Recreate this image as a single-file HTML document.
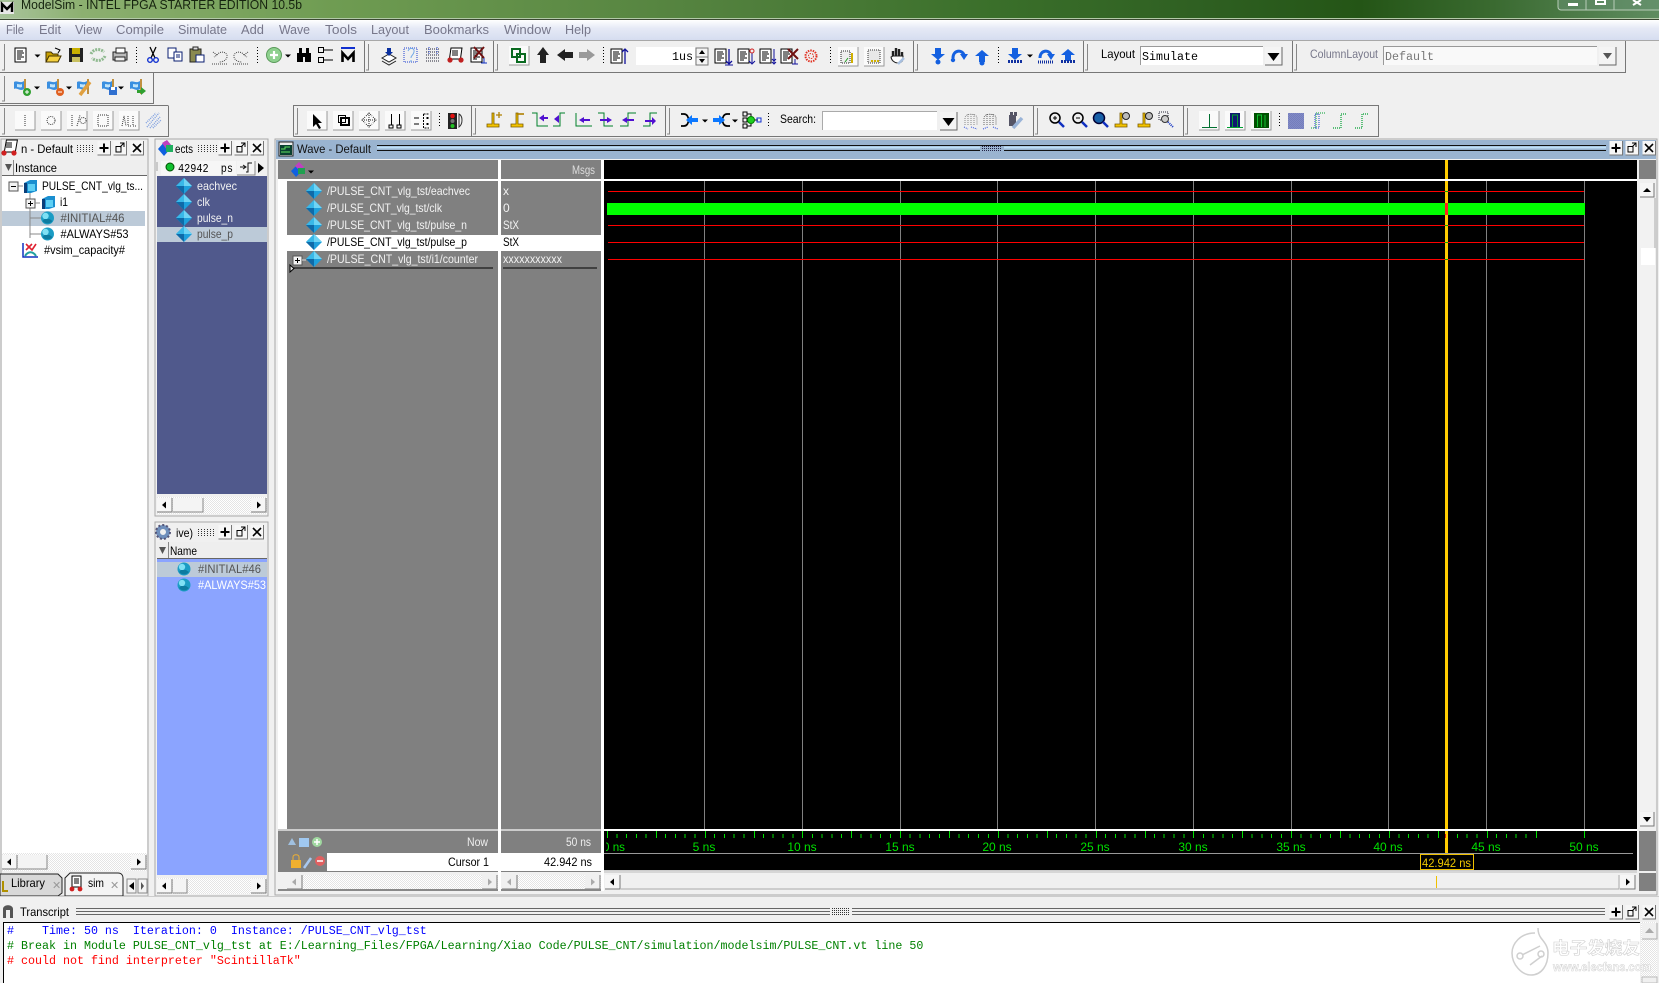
<!DOCTYPE html>
<html><head><meta charset="utf-8"><title>ModelSim</title>
<style>
html,body{margin:0;padding:0;background:#f0f0f0;overflow:hidden}
svg{display:block;position:absolute;left:0;top:0}
text{font-family:"Liberation Sans","Noto Sans CJK SC",sans-serif;font-size:12px;white-space:pre}
.m{fill:#77778a;font-size:13px}
.k{fill:#000}.w{fill:#f2f2f2}.g{fill:#5a5a5a}
.mono{font-family:"Liberation Mono",monospace;font-size:11.67px}
.r{fill:#00e000;text-anchor:middle;font-size:12px}
</style></head><body>
<svg width="1659" height="983" viewBox="0 0 1659 983" xmlns="http://www.w3.org/2000/svg">
<defs>
<linearGradient id="tb" x1="0" x2="1" y1="0" y2="0">
<stop offset="0" stop-color="#a9c49c"/><stop offset=".05" stop-color="#8cb070"/><stop offset=".2" stop-color="#6f9c52"/><stop offset=".45" stop-color="#507f3c"/><stop offset=".6" stop-color="#3a6f2a"/><stop offset=".72" stop-color="#2f6022"/><stop offset=".82" stop-color="#245516"/><stop offset=".9" stop-color="#3a6a30"/><stop offset="1" stop-color="#5f8c60"/>
</linearGradient>
<linearGradient id="mn" x1="0" x2="0" y1="0" y2="1"><stop offset="0" stop-color="#fff"/><stop offset=".4" stop-color="#e6eaf6"/><stop offset="1" stop-color="#d6ddf0"/></linearGradient>
<pattern id="ck" width="2" height="2" patternUnits="userSpaceOnUse"><rect width="2" height="2" fill="#fff"/><rect width="1" height="1" fill="#e4e4e4"/><rect x="1" y="1" width="1" height="1" fill="#e4e4e4"/></pattern>
<clipPath id="c0"><rect x="606" y="840" width="60" height="14"/></clipPath>
<g id="dia"><path d="M0-8 8 0 0 8-8 0Z" fill="#1ea0dc"/><path d="M0-8 8 0H0Z" fill="#6fd4f4"/><path d="M0-8-8 0H0Z" fill="#39b8e8"/><path d="M0 8-8 0H0Z" fill="#0f6aa8"/></g>
<g id="sph"><circle r="6.5" fill="#1b9cc4"/><circle cx="-2" cy="-2" r="3.2" fill="#7fe0f4"/><path d="M-5 3A6.5 6.5 0 0 0 5 3L2 1-3 1Z" fill="#0d7ba0"/></g>
<g id="cube"><path d="M-6-3 0-6H7V5L1 7H-6Z" fill="#1a8fd0"/><path d="M-2-2H5V5H-2Z" fill="#5fd0f4"/><path d="M-6-3V7H-3V-3Z" fill="#0b3f7a"/></g>
<g id="drop"><path d="M-3-1.5H3L0 1.5Z" fill="#000"/></g>
<g id="doc"><rect x="-6" y="-7" width="11" height="14" fill="#fff" stroke="#000"/><path d="M-4-4H2M-4-2H3M-4 0H1M-4 2H3M-4 4H0" stroke="#000" fill="none"/></g>
<g id="plus"><rect x="-6.5" y="-7" width="13" height="14" fill="#f6f6f6"/><path d="M6.5-7V7H-6.5" stroke="#777" fill="none"/><path d="M0-4.5V4.5M-4.5 0H4.5" stroke="#000" stroke-width="2"/></g>
<g id="flt"><rect x="-6.5" y="-7" width="13" height="14" fill="#f6f6f6"/><path d="M6.5-7V7H-6.5" stroke="#777" fill="none"/><path d="M-4-1.5H1V4H-4ZM0-5H4V-1" stroke="#000" fill="none"/><path d="M4-5 0-1" stroke="#000"/></g>
<g id="cls"><rect x="-6.5" y="-7" width="13" height="14" fill="#f6f6f6"/><path d="M6.5-7V7H-6.5" stroke="#777" fill="none"/><path d="M-4-4 4 4M4-4-4 4" stroke="#000" stroke-width="1.6"/></g>
<g id="sl"><rect width="15" height="14" fill="#f6f6f6"/><path d="M15 0V14H0" stroke="#777" fill="none"/><path d="M5 7 9 3.5V10.5Z" fill="#000"/></g>
<g id="sr"><rect width="15" height="14" fill="#f6f6f6"/><path d="M15 0V14H0" stroke="#777" fill="none"/><path d="M10 7 6 3.5V10.5Z" fill="#000"/></g>
<g id="sld"><rect width="15" height="14" fill="#f0f0f0"/><path d="M15 0V14H0" stroke="#777" fill="none"/><path d="M5 7 9 3.5V10.5Z" fill="#aaa"/></g>
<g id="srd"><rect width="15" height="14" fill="#f0f0f0"/><path d="M15 0V14H0" stroke="#777" fill="none"/><path d="M10 7 6 3.5V10.5Z" fill="#aaa"/></g>
<g id="box"><rect width="20" height="19" fill="#fafafa"/><path d="M20 0V19H0" stroke="#999" fill="none"/></g>
<g id="ddn"><rect width="17" height="18" fill="#f4f4f4"/><path d="M17 0V18H0" stroke="#666" fill="none"/><path d="M2.5 6H14.5L8.5 14Z" fill="#000"/></g>
<g id="ad"><path d="M-3-7H3V-1H7L0 5-7-1H-3Z" fill="#1460e0"/></g>
<g id="au"><path d="M-3 7H3V1H7L0-5-7 1H-3Z" fill="#1460e0"/></g>
<g id="fl"><path d="M-7-5C-4-7-1-3 3-6V2C-1 5-4 0-7 2Z" fill="#3a8fe0"/><path d="M-4-3C-2-3-1-2 1-3V0C-1 1-2 0-4 0Z" fill="#bfe4fa"/><path d="M3-8H5V7H3Z" fill="#c09040"/></g>
<g id="yb"><path d="M-6 5H-1V-6H1V5H6V8H-6Z" fill="#f4c400" stroke="#7a5c00" stroke-width=".8"/></g>
</defs>

<rect width="1659" height="983" fill="#f0f0f0"/>
<!-- title bar -->
<rect width="1659" height="19" fill="url(#tb)"/>
<rect y="18" width="1659" height="1" fill="#b3c9a8"/>
<rect y="19" width="1659" height="1" fill="#3c4a34"/>
<rect x="0" y="2" width="14" height="12" fill="#e8e8e8"/>
<path d="M2 12V4L7 9 12 4V12" stroke="#000" stroke-width="2.4" fill="none"/>
<text x="21" y="9" fill="#16240f" textLength="281" lengthAdjust="spacingAndGlyphs" style="font-size:13px">ModelSim - INTEL FPGA STARTER EDITION 10.5b</text>
<rect x="1558" y="-4" width="105" height="14" rx="3" fill="#6b9578" stroke="#b8ccb8" fill-opacity=".45"/>
<path d="M1586-2V10M1614-2V10" stroke="#b8ccb8"/>
<rect x="1568" y="3" width="10" height="3" fill="#fff"/>
<rect x="1596" y="0" width="9" height="4" fill="none" stroke="#fff" stroke-width="2"/>
<path d="M1633 0 1641 5M1641 0 1633 5" stroke="#fff" stroke-width="2"/>

<!-- menu -->
<rect y="20" width="1659" height="20" fill="url(#mn)"/>
<g>
<text class="m" x="6" y="34" lengthAdjust="spacingAndGlyphs" textLength="18">File</text>
<text class="m" x="39" y="34" lengthAdjust="spacingAndGlyphs" textLength="22">Edit</text>
<text class="m" x="75" y="34" lengthAdjust="spacingAndGlyphs" textLength="27">View</text>
<text class="m" x="116" y="34" lengthAdjust="spacingAndGlyphs" textLength="48">Compile</text>
<text class="m" x="178" y="34" lengthAdjust="spacingAndGlyphs" textLength="49">Simulate</text>
<text class="m" x="241" y="34" lengthAdjust="spacingAndGlyphs" textLength="23">Add</text>
<text class="m" x="279" y="34" lengthAdjust="spacingAndGlyphs" textLength="31">Wave</text>
<text class="m" x="325" y="34" lengthAdjust="spacingAndGlyphs" textLength="32">Tools</text>
<text class="m" x="371" y="34" lengthAdjust="spacingAndGlyphs" textLength="38">Layout</text>
<text class="m" x="424" y="34" lengthAdjust="spacingAndGlyphs" textLength="65">Bookmarks</text>
<text class="m" x="504" y="34" lengthAdjust="spacingAndGlyphs" textLength="47">Window</text>
<text class="m" x="565" y="34" lengthAdjust="spacingAndGlyphs" textLength="26">Help</text>
</g>
<rect y="40" width="1659" height="1" fill="#a8a8a8"/>

<!-- toolbar frames -->
<g stroke="#777" fill="none">
<path d="M0 72.5H1625.5V41M364.5 41V72M493.5 41V72M913.5 41V72M1083.5 41V72M1292.5 41V72"/>
<path d="M0 103.5H153.5V73"/>
<path d="M0 136.5H168.5V106M293.5 136.5V105.5H1378.5V136.5H293.5M471.5 105V136M665.5 105V136M1033.5 105V136M1183.5 105V136M168.5 105.5H0"/>
</g>
<g stroke="#888" fill="none">
<path d="M4.5 44V70H2M368.5 44V70H366M497.5 44V70H495M917.5 44V70H915M1087.5 44V70H1085M1296.5 44V70H1294"/>
<path d="M4.5 76V101H2M4.5 108V134H2M297.5 108V134H295M475.5 108V134H473M669.5 108V134H667M1037.5 108V134H1035M1187.5 108V134H1185"/>
</g>
<g stroke="#000" stroke-dasharray="1 2" fill="none">
<path d="M136.5 47V64M257.5 47V64M603.5 47V64M830.5 47V64M998.5 47V64M439.5 113V128M768.5 113V128M1279.5 113V128"/>
</g>

<!-- row 1 icons -->
<use href="#doc" x="21" y="55"/><use href="#drop" x="37.5" y="56"/>
<g transform="translate(53,55)"><path d="M-7 7V-3H-2L0-1H5V7Z" fill="#c8a000" stroke="#443300"/><path d="M-7 7-4 1H8L5 7Z" fill="#f4d040" stroke="#443300"/><path d="M2-7 7-5 5-2" stroke="#000" fill="none"/></g>
<g transform="translate(76,55)"><rect x="-7" y="-7" width="14" height="14" fill="#222"/><rect x="-4" y="-7" width="8" height="6" fill="#c8b000"/><rect x="-4" y="2" width="8" height="5" fill="#c8c060"/></g>
<g transform="translate(98,55)" fill="none" stroke="#8fb98f" stroke-width="3" stroke-dasharray="2 1"><path d="M-7-1C-5-6 2-7 6-3"/><path d="M7 1C5 6-2 7-6 3"/></g>
<g transform="translate(120,55)"><rect x="-7" y="-3" width="14" height="8" fill="#bbb" stroke="#222"/><rect x="-4" y="-7" width="9" height="5" fill="#fff" stroke="#222"/><rect x="-5" y="2" width="10" height="4" fill="#eee" stroke="#222"/></g>
<g transform="translate(153,55)" fill="none"><path d="M-3-8 2 3M3-8-2 3" stroke="#000" stroke-width="1.3"/><circle cx="-3" cy="5" r="2.3" stroke="#1030d0" stroke-width="1.4"/><circle cx="3" cy="5" r="2.3" stroke="#1030d0" stroke-width="1.4"/></g>
<g transform="translate(175,54)"><rect x="-7" y="-6" width="8" height="10" fill="#fff" stroke="#0a1e70"/><rect x="-1" y="-2" width="8" height="9" fill="#fff" stroke="#0a1e70"/><path d="M1 1H5M1 3H5" stroke="#0a1e70"/></g>
<g transform="translate(197,55)"><rect x="-7" y="-6" width="11" height="13" fill="#8a8a50" stroke="#222"/><rect x="-4" y="-8" width="5" height="3" fill="#ddd" stroke="#222"/><rect x="-1" y="0" width="8" height="7" fill="#fff" stroke="#0a1e70"/></g>
<g transform="translate(220,56)" fill="none" stroke="#444" stroke-dasharray="1 1"><path d="M-7-4-3-1-6 1M-3-1C0-6 8-4 7 1 6 5 2 6-1 6"/><path d="M-8 8H8"/></g>
<g transform="translate(241,56)" fill="none" stroke="#444" stroke-dasharray="1 1"><path d="M7-4 3-1 6 1M3-1C0-6-8-4-7 1-6 5-2 6 1 6"/><path d="M-8 8H8"/></g>
<g transform="translate(274,55)"><circle r="7.5" fill="#8ed08e" stroke="#5a9a5a"/><path d="M0-4V4M-4 0H4" stroke="#fff" stroke-width="2.2"/></g><use href="#drop" x="288" y="56"/>
<g transform="translate(304,55)" fill="#000"><rect x="-7" y="-2" width="6" height="9"/><rect x="1" y="-2" width="6" height="9"/><rect x="-5" y="-7" width="3" height="6"/><rect x="2" y="-7" width="3" height="6"/><rect x="-2" y="-2" width="4" height="4"/></g>
<g transform="translate(326,55)" fill="none" stroke="#000"><rect x="-7.5" y="-7.5" width="5" height="5"/><rect x="-7.5" y="2.5" width="5" height="5"/><path d="M-2-5H7M-2 5H7"/></g>
<rect x="341" y="47" width="14" height="2" fill="#1030d0"/>
<path d="M342.500 62V53L348 59 353.500 53V62" stroke="#000" stroke-width="2.6" fill="none"/>
<g transform="translate(389,56)"><path d="M-7 2 0-2 7 2 0 6Z" fill="#fff" stroke="#222"/><path d="M-7 5 0 9 7 5" stroke="#222" fill="none"/><path d="M-2-8H2V-4H4L0 0-4-4H-2Z" fill="#0a30a0"/></g>
<g transform="translate(411,55)" fill="none" stroke="#2040d0" stroke-dasharray="1 1"><rect x="-7" y="-7" width="13" height="14"/></g><path d="M408 51C410 47 415 48 414 52S411 55 411 58M411 60V62" stroke="#70a8e8" fill="none"/>
<g transform="translate(433,55)" stroke="#223" stroke-dasharray="1 1" fill="none"><path d="M-7-6H7M-7-3H7M-7 0H7M-7 3H7M-7 6H7"/><path d="M-4-8V0M4-8V0" stroke="#2040d0"/></g>
<g transform="translate(455,55)"><rect x="-5" y="-7" width="11" height="11" fill="#fff" stroke="#000" transform="skewX(-8)"/><path d="M-3-4H3M-3-2H3M-3 0H3" stroke="#000"/><circle cx="-5" cy="5" r="2.6" fill="#c02020"/><circle cx="6" cy="5" r="2.6" fill="#c02020"/></g>
<g transform="translate(477,55)"><use href="#doc" x="0" y="0"/><path d="M-3-8 7 3M7-8-3 3" stroke="#701010" stroke-width="2"/><path d="M7 3V8M4 8H10" stroke="#1030c0"/></g>
<use href="#box" x="509" y="46"/>
<g transform="translate(518,55)" fill="none" stroke="#0a6a20" stroke-width="2"><rect x="-6" y="-6" width="8" height="8"/><rect x="-1" y="-1" width="8" height="8"/></g>
<path d="M543 47 549 55H546V63H540V55H537Z" fill="#222"/>
<path d="M557 55 565 49V52H573V58H565V61Z" fill="#222"/>
<path d="M595 55 587 49V52H579V58H587V61Z" fill="#999"/>
<g transform="translate(620,56)"><use href="#doc" x="-3" y="0"/><path d="M5 8V-7M2-4 5-7 8-4" stroke="#10109a" fill="none" stroke-width="1.3"/></g>
<rect x="636" y="47" width="59" height="18" fill="#fff"/>
<text class="mono" x="693" y="60" text-anchor="end" style="font-size:11.67px" fill="#000">1us</text>
<rect x="696" y="48" width="12" height="9" fill="#f4f4f4" stroke="#777"/><rect x="696" y="57" width="12" height="8" fill="#f4f4f4" stroke="#777"/>
<path d="M699 54 702 50 705 54ZM699 59 702 63 705 59Z" fill="#000"/>
<g transform="translate(724,56)"><use href="#doc" x="-3" y="0"/><path d="M5-7V7M2 5 5 8 8 5" stroke="#10109a" fill="none" stroke-width="1.3"/><path d="M1 9H9" stroke="#10109a"/></g>
<g transform="translate(747,56)"><use href="#doc" x="-3" y="0"/><path d="M5-3V7M2 5 5 8 8 5" stroke="#10109a" fill="none"/><circle cx="5" cy="-5" r="2" fill="none" stroke="#d02020"/></g>
<g transform="translate(769,56)"><use href="#doc" x="-3" y="0"/><path d="M5-7V7M3 3 5 5 7 3M3 6 5 8 7 6" stroke="#10109a" fill="none"/></g>
<g transform="translate(790,56)"><use href="#doc" x="-3" y="0"/><path d="M-2-7 8 3M8-7-2 3" stroke="#701010" stroke-width="2"/><path d="M5 3V8M2 8H8" stroke="#10109a"/></g>
<g transform="translate(811,56)" fill="none" stroke="#e03020" stroke-width="2" stroke-dasharray="1.5 1"><circle r="5.500"/><circle r="2.500" stroke-width="1"/></g>
<use href="#box" x="838" y="47"/><use href="#box" x="864" y="47"/>
<g transform="translate(847,56)"><path d="M-6-5H3V7H-6Z" fill="#eee" stroke="#222" stroke-dasharray="1 1"/><path d="M5-3V7" stroke="#d0b000" stroke-width="2"/><path d="M-2 6 1 2" stroke="#20a020"/></g>
<g transform="translate(874,56)"><path d="M-6-6H6V7H-6Z" fill="#e8e8e8" stroke="#333" stroke-dasharray="1 1"/><path d="M-3 5H5" stroke="#d0b000" stroke-width="2" stroke-dasharray="2 1"/></g>
<g transform="translate(897,56)"><path d="M-4 3V-5M-1 2V-8M2 2V-7M5 3V-4" stroke="#222" stroke-width="2.4"/><path d="M-6 1C-5 8 5 9 6 3V0H-4Z" fill="#fff" stroke="#222"/><path d="M1 8 7 2" stroke="#a8c0e0" stroke-width="2.5"/></g>
<g transform="translate(938,55)"><use href="#ad"/><circle cy="7" r="2.5" fill="#1460e0"/></g>
<g transform="translate(959,55)" fill="none"><path d="M-6 3C-6-5 3-6 5 0" stroke="#1460e0" stroke-width="3"/><path d="M1-1H9L5 5Z" fill="#1460e0"/><circle cx="-6" cy="5" r="2.200" fill="#1460e0"/></g>
<g transform="translate(982,55)"><use href="#au"/><circle cy="8" r="2.500" fill="#1460e0"/></g>
<g transform="translate(1015,55)"><use href="#ad"/><path d="M-7 6.500H7" stroke="#1030a0" stroke-width="3" stroke-dasharray="2 1"/></g><use href="#drop" x="1030" y="56"/>
<g transform="translate(1046,55)" fill="none"><path d="M-6 3C-6-5 3-6 5 0" stroke="#1460e0" stroke-width="3"/><path d="M1-1H9L5 5Z" fill="#1460e0"/><path d="M-8 7H8" stroke="#1030a0" stroke-width="3" stroke-dasharray="1 1"/></g>
<g transform="translate(1068,54)"><use href="#au"/><path d="M-7 7.500H7" stroke="#1030a0" stroke-width="3" stroke-dasharray="2 1"/></g>
<text x="1101" y="58" class="k" lengthAdjust="spacingAndGlyphs" textLength="34">Layout</text>
<rect x="1140" y="46" width="123" height="19" fill="#fff"/><path d="M1263 46.500H1140.500V65" stroke="#999" fill="none"/>
<text class="mono k" x="1142" y="60" style="font-size:11.67px">Simulate</text>
<use href="#ddn" x="1265" y="47"/>
<text x="1310" y="58" fill="#77778a" lengthAdjust="spacingAndGlyphs" textLength="68">ColumnLayout</text>
<rect x="1383" y="46" width="214" height="19" fill="#fff" fill-opacity=".6"/><path d="M1597 46.500H1383.500V65" stroke="#999" fill="none"/>
<text class="mono" x="1385" y="60" fill="#777" style="font-size:11.67px">Default</text>
<rect x="1599" y="47" width="17" height="18" fill="#f4f4f4"/><path d="M1616 47V65H1599" stroke="#666" fill="none"/>
<path d="M1603 53H1612L1607.500 59Z" fill="#555"/>

<!-- row 2 icons -->
<g transform="translate(21,87)"><use href="#fl"/><circle cx="6" cy="5" r="4" fill="#30a030"/><path d="M4 5H8M6 3V7" stroke="#fff"/></g><use href="#drop" x="37" y="88"/>
<g transform="translate(54,87)"><use href="#fl"/><circle cx="6" cy="5" r="4" fill="#e06020"/><path d="M4 5H8" stroke="#fff"/></g><use href="#drop" x="69" y="88"/>
<g transform="translate(84,87)"><use href="#fl"/><path d="M-4 8 6-5" stroke="#e0a040" stroke-width="3.500"/></g>
<g transform="translate(109,87)"><use href="#fl"/><rect x="0" y="0" width="8" height="8" fill="#3070d0"/><rect x="2" y="0" width="4" height="3" fill="#fff"/></g><use href="#drop" x="121" y="88"/>
<g transform="translate(137,87)"><use href="#fl"/><path d="M0 3H4V0L9 4 4 8V6H0Z" fill="#30a030"/></g>

<!-- row 3 -->
<use href="#box" x="15" y="111"/><use href="#box" x="41" y="111"/><use href="#box" x="67" y="111"/><use href="#box" x="93" y="111"/><use href="#box" x="119" y="111"/>
<g stroke="#333" stroke-dasharray="1 1" fill="none">
<path d="M25 115V127"/><circle cx="51" cy="120.500" r="4"/><path d="M72 126V115M77 126 80 115"/><circle cx="83" cy="120.500" r="3"/><rect x="98" y="115" width="10" height="11"/>
<path d="M122 126 124 116 126 126M128 116V126H131M133 116V126H136"/>
</g>
<g transform="translate(153,120)" stroke="#7fa0e0" stroke-dasharray="1 1" fill="none" stroke-width="1.500"><path d="M-6 7 6-7M-7 3 3-7M-3 8 7-3M0 8 8 0"/></g>
<use href="#box" x="307" y="111"/><use href="#box" x="333" y="111"/><use href="#box" x="359" y="111"/><use href="#box" x="385" y="111"/><use href="#box" x="411" y="111"/>
<path d="M313 114V127L316 124 319 129 321 128 318 123H322Z" fill="#000"/>
<g fill="none" stroke="#000"><rect x="338.500" y="115.500" width="7" height="7" stroke-width="1"/><rect x="341" y="118" width="8" height="7" stroke-width="2"/></g>
<g transform="translate(369,120)" fill="none" stroke="#222" stroke-dasharray="1 1"><path d="M0-7V7M-7 0H7M-3-4 0-7 3-4M-3 4 0 7 3 4M-4-3-7 0-4 3M4-3 7 0 4 3"/></g>
<g stroke="#000" fill="none"><path d="M391.500 114V125M399.500 114V125"/><rect x="389" y="125" width="4" height="3"/><rect x="397" y="125" width="4" height="3"/></g>
<g stroke="#000" fill="none"><path d="M423.500 114V128H429M423.500 114H429" stroke-dasharray="2 1"/><path d="M414 118H419M414 124H419" /><path d="M426 118H429M426 124H429M427.500 117V119M427.500 123V125" /></g>
<rect x="448" y="113" width="9" height="16" fill="#222"/><circle cx="452.500" cy="116" r="2.300" fill="#e01010"/><circle cx="452.500" cy="121" r="2" fill="#777"/><circle cx="452.500" cy="126" r="2" fill="#20c020"/><path d="M459 114C463 116 463 124 459 127Z" fill="none" stroke="#333"/>
<use href="#yb" x="493" y="119"/><path d="M499 112V118M496 115H502" stroke="#b08000" stroke-width="1.300"/>
<use href="#yb" x="517" y="119"/><path d="M517 114H524" stroke="#b08000" stroke-width="1.600"/>
<g fill="none" stroke="#00802a"><path d="M532 113H537V126H548"/><path d="M553 126H560V113H565"/><path d="M576 113V126H592"/><path d="M598 113H604V126H613"/><path d="M620 126H628V113H636"/><path d="M643 126H650V113H657"/></g>
<g fill="#5010d0">
<path d="M539 118 544 114.500V117H548V119H544V121.500Z"/><path d="M554 119 559 115V123Z"/>
<path d="M579 120 584 117V119H590V121H584V123Z"/><path d="M612 120 607 117V119H600V121H607V123Z"/>
<path d="M622 120 627 117V119H634V121H627V123Z"/>
<path d="M645 120 652 120 652 122 645 122ZM652 117 656 121 652 125Z"/>
</g>
<g transform="translate(690,120)"><path d="M-9-6H-6C0-6 0 6-6 6H-9" fill="none" stroke="#000" stroke-width="1.700"/><path d="M8-2H2V-5L-4 0 2 5V2H8Z" fill="#0c78ff"/></g><use href="#drop" x="705" y="121"/>
<g transform="translate(721,120)"><path d="M9-6H6C0-6 0 6 6 6H9" fill="none" stroke="#000" stroke-width="1.700"/><path d="M-8-2H-2V-5L4 0-2 5V2H-8Z" fill="#0c78ff"/></g><use href="#drop" x="735" y="121"/>
<g transform="translate(751,120)" fill="none" stroke="#000"><rect x="-8" y="-8" width="4" height="4"/><rect x="-8" y="4" width="4" height="4"/><rect x="-8" y="-2" width="4" height="4"/><path d="M-4-6H0V6H-4M-4 0H7"/><circle cx="0" cy="0" r="3.500" fill="#20d020" stroke="#008000"/><rect x="6" y="-2" width="4" height="4" stroke="#1030d0"/></g>
<text x="780" y="123" class="k" lengthAdjust="spacingAndGlyphs" textLength="36">Search:</text>
<rect x="822" y="111" width="115" height="19" fill="#fff"/><path d="M937 111.500H822.500V130" stroke="#aaa" fill="none"/>
<use href="#ddn" x="940" y="112"/>
<g transform="translate(971,120)" stroke="#888" stroke-dasharray="1 1" fill="none"><path d="M-6 5V-2C-6-7 6-7 6-2V5M-3 5V-6M0 5V-7M3 5V-6"/><path d="M-7 7-3 9M0 7 6 9" stroke="#3050e0"/></g>
<g transform="translate(990,120)" stroke="#666" stroke-dasharray="1 1" fill="none"><path d="M-6 5V-2C-6-7 6-7 6-2V5M-3 5V-6M0 5V-7M3 5V-6"/><path d="M3 7 8 9M-7 9-2 7" stroke="#3050e0"/></g>
<g transform="translate(1015,120)"><rect x="-6" y="-5" width="7" height="11" fill="#556"/><rect x="-5" y="-8" width="3" height="4" fill="#556"/><rect x="-1" y="-8" width="3" height="4" fill="#556"/><path d="M-2 8 7-2" stroke="#9ab4d8" stroke-width="3.500"/></g>
<g fill="none">
<g transform="translate(1057,120)"><circle cx="-2" cy="-2" r="5" fill="#eee" stroke="#000" stroke-width="1.500"/><path d="M-4-2H0M-2-4V0" stroke="#000"/><path d="M2 2 7 7" stroke="#1030c0" stroke-width="2.500"/></g>
<g transform="translate(1080,120)"><circle cx="-2" cy="-2" r="5" fill="#eee" stroke="#000" stroke-width="1.500"/><path d="M-4-2H0" stroke="#000"/><path d="M2 2 7 7" stroke="#1030c0" stroke-width="2.500"/></g>
<g transform="translate(1101,120)"><circle cx="-2" cy="-2" r="5.500" fill="#1860a8" stroke="#003" stroke-width="1.500"/><path d="M2 2 7 7" stroke="#1030c0" stroke-width="2.500"/></g>
</g>
<use href="#yb" x="1121" y="119"/><use href="#yb" x="1144" y="119"/>
<circle cx="1126" cy="116" r="3.500" fill="#bbb" stroke="#222"/><circle cx="1149" cy="116" r="3.500" fill="#bbb" stroke="#222"/>
<g transform="translate(1166,120)" fill="none"><rect x="-7" y="-8" width="9" height="8" stroke="#223" stroke-dasharray="1 1"/><circle cx="-1" cy="-1" r="3.500" fill="#ccc" stroke="#333"/><path d="M2 2 7 7" stroke="#1030c0" stroke-dasharray="1 1" stroke-width="2"/></g>
<use href="#box" x="1199" y="111"/><use href="#box" x="1225" y="111"/><use href="#box" x="1251" y="111"/>
<path d="M1202 127.500H1217M1209.500 114V127" stroke="#007030" fill="none"/>
<rect x="1230" y="113" width="10" height="15" fill="#101870"/><path d="M1232.500 127V115H1237.500V127M1227 127.500H1243" stroke="#00a030" fill="none"/>
<rect x="1254" y="113" width="15" height="15" fill="#005000"/><path d="M1257.500 127V115H1261.500V127M1265 115V127" stroke="#10c030" fill="none"/>
<rect x="1288" y="113" width="16" height="16" fill="#1a2a9a"/>
<rect x="1288" y="113" width="16" height="16" fill="url(#ck)" opacity=".45"/>
<g fill="none" stroke-dasharray="1 1"><path d="M1311 128H1316V113H1325" stroke="#00a030"/><rect x="1315" y="114" width="4" height="14" stroke="#2040d0"/><path d="M1333 128H1341V114H1346" stroke="#00a030" stroke-width="1.200"/><path d="M1355 128H1362V114H1368" stroke="#00a030" stroke-width="1.200"/></g>

<!-- panel frames -->
<rect x="1" y="139" width="147" height="757" fill="#f0f0f0" stroke="#a8a8a8"/>
<rect x="155" y="139" width="113" height="377" fill="#f0f0f0" stroke="#a8a8a8"/>
<rect x="155" y="522" width="113" height="374" fill="#f0f0f0" stroke="#a8a8a8"/>
<rect x="275" y="139" width="1382" height="756" fill="#f0f0f0" stroke="#a8a8a8"/>

<!-- left panel -->
<g transform="translate(9,148)"><rect x="-4" y="-8" width="11" height="12" fill="#fff" stroke="#000" transform="skewX(-10)"/><path d="M-3-5H3M-3-3H3M-3-1H3" stroke="#000"/><circle cx="-5" cy="5" r="2.600" fill="#d02020"/><circle cx="5" cy="5" r="2.600" fill="#d02020"/></g>
<text x="21" y="153" class="k" lengthAdjust="spacingAndGlyphs" textLength="52">n - Default</text>
<g stroke="#333" stroke-dasharray="1 2"><path d="M77 145.500H94M77 147.500H94M77 149.500H94M77 151.500H94"/></g>
<use href="#plus" x="104" y="148"/><use href="#flt" x="120" y="148"/><use href="#cls" x="137" y="148"/>
<rect x="2" y="160" width="145" height="16" fill="#eeeeee"/>
<rect x="2" y="175" width="145" height="1" fill="#666"/>
<path d="M5 164H12L8.500 171Z" fill="#555"/><path d="M13.500 160V175" stroke="#888"/>
<text x="15" y="172" class="k" lengthAdjust="spacingAndGlyphs" textLength="42">Instance</text>
<rect x="2" y="176" width="145" height="677" fill="#fff"/>
<rect x="2" y="211" width="143" height="15" fill="#bccad8"/>
<g stroke="#888" fill="none"><path d="M18 186H23M30 192V238M30 218H41M30 234H41M30 203H26"/></g>
<rect x="9" y="182" width="9" height="9" fill="#f4f4f4" stroke="#555"/><path d="M11 186.500H16" stroke="#000"/>
<use href="#cube" x="30" y="186"/>
<text x="42" y="190" class="k" lengthAdjust="spacingAndGlyphs" textLength="101">PULSE_CNT_vlg_ts...</text>
<rect x="26" y="199" width="9" height="9" fill="#f4f4f4" stroke="#555"/><path d="M28 203.500H33M30.500 201V206" stroke="#000"/>
<path d="M35 203H40" stroke="#888"/>
<use href="#cube" x="48" y="202"/>
<text x="60" y="206" class="k" lengthAdjust="spacingAndGlyphs" textLength="8">i1</text>
<use href="#sph" x="47.500" y="218"/><use href="#sph" x="47.500" y="234"/>
<text x="60.500" y="222" fill="#555" lengthAdjust="spacingAndGlyphs" textLength="64">#INITIAL#46</text>
<text x="60.500" y="238" class="k" lengthAdjust="spacingAndGlyphs" textLength="68">#ALWAYS#53</text>
<g transform="translate(30,250)"><path d="M-7-7V7H8" stroke="#1030c0" fill="none" stroke-width="1.500"/><path d="M-4-6 2 0 6-6M-4 0 2-6" stroke="#e02030" stroke-width="1.600" fill="none"/><path d="M-5 6C-2 1 3 1 6 6" stroke="#20a0a0" fill="none" stroke-width="2"/></g>
<text x="44" y="254" class="k" lengthAdjust="spacingAndGlyphs" textLength="81">#vsim_capacity#</text>
<!-- left scroll -->
<rect x="2" y="853" width="145" height="18" fill="url(#ck)"/>
<use href="#sl" x="2" y="855"/><rect x="18" y="855" width="29" height="14" fill="#f4f4f4"/><path d="M47 855V869H18" stroke="#888" fill="none"/>
<use href="#sr" x="131" y="855"/>
<!-- tabs -->
<path d="M0 874H58L62 878V893L58 896H0Z" fill="#d8d8d8" stroke="#222"/>
<path d="M70 873H118C122 873 123 876 123 878V896H65V878Z" fill="#f4f4f4" stroke="#222"/>
<path d="M3 881V891H8" stroke="#b09000" fill="none" stroke-width="2"/>
<text x="11" y="887" class="k" lengthAdjust="spacingAndGlyphs" textLength="34">Library</text>
<text x="52" y="889" fill="#999" style="font-size:11px">✕</text>
<g transform="translate(76,884)"><rect x="-4" y="-8" width="9" height="11" fill="#fff" stroke="#000"/><path d="M-2-5H3M-2-3H3M-2-1H3" stroke="#000"/><circle cx="-4" cy="5" r="2.400" fill="#d02020"/><circle cx="4" cy="5" r="2.400" fill="#d02020"/></g>
<text x="88" y="887" class="k" lengthAdjust="spacingAndGlyphs" textLength="16">sim</text>
<text x="110" y="889" fill="#999" style="font-size:11px">✕</text>
<rect x="127" y="879" width="9" height="14" fill="#f4f4f4" stroke="#888"/><path d="M129 886 134 882V890Z" fill="#000"/>
<rect x="138" y="879" width="9" height="14" fill="#f4f4f4" stroke="#888"/><path d="M144 886 141 882V890Z" fill="#555"/>

<!-- objects panel -->
<g transform="translate(165,148)"><path d="M-7 1 0-7 6 0-1 8Z" fill="#1060e0"/><path d="M-3-5 2-8 7-2 2 2Z" fill="#c040c0"/><rect x="1" y="-3" width="7" height="7" fill="#20b060"/></g>
<text x="175" y="153" class="k" lengthAdjust="spacingAndGlyphs" textLength="18">ects</text>
<g stroke="#333" stroke-dasharray="1 2"><path d="M198 145.500H218M198 147.500H218M198 149.500H218M198 151.500H218"/></g>
<use href="#plus" x="225" y="148"/><use href="#flt" x="241" y="148"/><use href="#cls" x="257" y="148"/>
<path d="M157 162.500V171" stroke="#555" stroke-dasharray="1 1"/>
<rect x="161" y="161" width="75" height="14" fill="#f6f6f6"/>
<circle cx="170" cy="167" r="4" fill="#10c030" stroke="#005000"/>
<text class="mono k" x="178" y="172" style="font-size:11.67px" lengthAdjust="spacingAndGlyphs" textLength="55">42942  ps</text>
<rect x="237" y="161" width="18" height="14" fill="#f4f4f4"/><path d="M255 161V175H237" stroke="#888" fill="none"/>
<path d="M240 167H245M243 165 246 167 243 169M246 172H248V163H252" stroke="#111" fill="none"/>
<path d="M258 163 264 168 258 173Z" fill="#000"/>
<rect x="157" y="176" width="110" height="318" fill="#50598c"/>
<rect x="157" y="227" width="110" height="15" fill="#bccad8"/>
<use href="#dia" x="184" y="186"/><use href="#dia" x="184" y="202"/><use href="#dia" x="184" y="218"/><use href="#dia" x="184" y="234"/>
<text x="197" y="190" class="w" lengthAdjust="spacingAndGlyphs" textLength="40">eachvec</text>
<text x="197" y="206" class="w" lengthAdjust="spacingAndGlyphs" textLength="13">clk</text>
<text x="197" y="222" class="w" lengthAdjust="spacingAndGlyphs" textLength="36">pulse_n</text>
<text x="197" y="238" fill="#555" lengthAdjust="spacingAndGlyphs" textLength="36">pulse_p</text>
<rect x="157" y="497" width="110" height="17" fill="url(#ck)"/>
<use href="#sl" x="157" y="498"/><rect x="173" y="498" width="30" height="14" fill="#f4f4f4"/><path d="M203 498V512H173" stroke="#888" fill="none"/>
<use href="#sr" x="251" y="498"/>

<!-- active panel -->
<g transform="translate(163,532)"><circle r="5" fill="none" stroke="#6f8fbc" stroke-width="4"/><circle r="7" fill="none" stroke="#557" stroke-dasharray="2 2" stroke-width="2"/></g>
<text x="176" y="537" class="k" lengthAdjust="spacingAndGlyphs" textLength="17">ive)</text>
<g stroke="#333" stroke-dasharray="1 2"><path d="M198 529.500H215M198 531.500H215M198 533.500H215M198 535.500H215"/></g>
<use href="#plus" x="225" y="532"/><use href="#flt" x="241" y="532"/><use href="#cls" x="257" y="532"/>
<rect x="157" y="542" width="110" height="16" fill="#eeeeee"/><rect x="157" y="558" width="110" height="1" fill="#666"/>
<path d="M159 547H166L162.500 554Z" fill="#555"/><path d="M168.500 542V558" stroke="#888"/>
<text x="170" y="555" class="k" lengthAdjust="spacingAndGlyphs" textLength="27">Name</text>
<rect x="157" y="559" width="110" height="316" fill="#8ba4ff"/>
<rect x="157" y="562" width="110" height="15" fill="#bccad8"/>
<use href="#sph" x="184" y="569"/><use href="#sph" x="184" y="585"/>
<text x="198" y="573" fill="#555" lengthAdjust="spacingAndGlyphs" textLength="63">#INITIAL#46</text>
<text x="198" y="589" fill="#fff" lengthAdjust="spacingAndGlyphs" textLength="68">#ALWAYS#53</text>
<rect x="157" y="878" width="110" height="16" fill="url(#ck)"/>
<use href="#sl" x="157" y="879"/><rect x="173" y="879" width="14" height="14" fill="#f4f4f4"/><path d="M187 879V893H173" stroke="#888" fill="none"/>
<use href="#sr" x="251" y="879"/>

<!-- wave header -->
<rect x="276" y="140" width="1380" height="19" fill="#9ab4d0"/>
<rect x="279" y="142" width="14" height="14" fill="#eee" stroke="#222"/><rect x="280" y="145" width="12" height="10" fill="#0a4030"/><path d="M281 149H285V147H290M281 152H290" stroke="#60e060" fill="none"/>
<text x="297" y="153" fill="#111" lengthAdjust="spacingAndGlyphs" textLength="74">Wave - Default</text>
<g fill="none"><path d="M377 145.500H1606M377 150.500H1606" stroke="#111"/><path d="M377 147.500H1606" stroke="#bfe0f8" stroke-width="2"/><path d="M980 146H1004V151H980Z" fill="#9ab4d0"/><path d="M982 146.500H1002M982 148.500H1002M982 150.500H1002" stroke="#224" stroke-dasharray="1 1"/></g>
<use href="#plus" x="1616" y="148"/><use href="#flt" x="1632" y="148"/><use href="#cls" x="1649" y="148"/>

<!-- wave body -->
<rect x="278" y="160" width="220" height="693" fill="#808080"/>
<rect x="278" y="179" width="220" height="2" fill="#fff"/>
<rect x="278" y="181" width="9" height="648" fill="#fff"/>
<rect x="498" y="160" width="3" height="731" fill="#fff"/>
<rect x="501" y="160" width="100" height="693" fill="#808080"/>
<rect x="501" y="179" width="100" height="2" fill="#fff"/>
<rect x="601" y="160" width="3" height="731" fill="#fff"/>
<rect x="604" y="160" width="1033" height="19" fill="#000"/>
<rect x="604" y="179" width="1033" height="2" fill="#fff"/>
<rect x="604" y="181" width="1033" height="648" fill="#000"/>
<rect x="287" y="235" width="211" height="16" fill="#fff"/>
<rect x="501" y="235" width="100" height="16" fill="#fff"/>
<g transform="translate(297,170)"><path d="M-6 1 1-6 6 0-1 7Z" fill="#1060e0"/><path d="M-2-4 2-8 7-3 3 1Z" fill="#c040c0"/><rect x="1" y="-2" width="7" height="6" fill="#20a050"/></g>
<use href="#drop" x="311" y="172"/>
<text x="572" y="174" fill="#ddd" lengthAdjust="spacingAndGlyphs" textLength="23">Msgs</text>
<use href="#dia" x="314" y="191"/><use href="#dia" x="314" y="208"/><use href="#dia" x="314" y="225"/><use href="#dia" x="314" y="242"/><use href="#dia" x="314" y="259"/>
<text x="327" y="195" class="w" lengthAdjust="spacingAndGlyphs" textLength="143">/PULSE_CNT_vlg_tst/eachvec</text>
<text x="327" y="212" class="w" lengthAdjust="spacingAndGlyphs" textLength="115">/PULSE_CNT_vlg_tst/clk</text>
<text x="327" y="229" class="w" lengthAdjust="spacingAndGlyphs" textLength="140">/PULSE_CNT_vlg_tst/pulse_n</text>
<text x="327" y="246" class="k" lengthAdjust="spacingAndGlyphs" textLength="140">/PULSE_CNT_vlg_tst/pulse_p</text>
<text x="327" y="263" class="w" lengthAdjust="spacingAndGlyphs" textLength="151">/PULSE_CNT_vlg_tst/i1/counter</text>
<text x="503" y="195" class="w">x</text>
<text x="503" y="212" class="w">0</text>
<text x="503" y="229" class="w" lengthAdjust="spacingAndGlyphs" textLength="16">StX</text>
<text x="503" y="246" class="k" lengthAdjust="spacingAndGlyphs" textLength="16">StX</text>
<text x="503" y="263" class="w" lengthAdjust="spacingAndGlyphs" textLength="59">xxxxxxxxxxx</text>
<rect x="293" y="256" width="9" height="9" fill="#f4f4f4" stroke="#555"/><path d="M295 260.500H300M297.500 258V263" stroke="#000"/><path d="M302 260H306" stroke="#ddd"/>
<path d="M290 268H493M503 268H597" stroke="#000"/>
<path d="M290 265 294 268.500 290 272Z" fill="#ddd" stroke="#000"/>

<!-- grid -->
<path d="M704.500 181V829M802.500 181V829M900.500 181V829M997.500 181V829M1095.500 181V829M1193.500 181V829M1291.500 181V829M1388.500 181V829M1486.500 181V829M1584.500 181V829" stroke="#808080"/>
<g fill="#ff0000"><rect x="608" y="191" width="976" height="1"/><rect x="608" y="225" width="976" height="1"/><rect x="608" y="242" width="976" height="1"/><rect x="608" y="259" width="976" height="1"/></g>
<rect x="607" y="203" width="978" height="12" fill="#00ff00"/>
<rect x="1445" y="160" width="3" height="19" fill="#ffcc00"/>
<rect x="1445" y="181" width="3" height="672" fill="#ffcc00"/>
<rect x="1445" y="203" width="3" height="12" fill="#ff2020"/>
<g fill="#00b000"><rect x="1445" y="191" width="3" height="1"/><rect x="1445" y="225" width="3" height="1"/><rect x="1445" y="242" width="3" height="1"/><rect x="1445" y="259" width="3" height="1"/></g>

<!-- ruler -->
<rect x="604" y="829" width="1033" height="2" fill="#fff"/>
<rect x="604" y="831" width="1033" height="40" fill="#000"/>
<path shape-rendering="crispEdges" stroke="#00e000" d="M607.500 831v7M656.500 831v7M705.500 831v7M754.500 831v7M802.500 831v7M851.500 831v7M900.500 831v7M949.500 831v7M998.500 831v7M1047.500 831v7M1096.500 831v7M1145.500 831v7M1193.500 831v7M1242.500 831v7M1291.500 831v7M1340.500 831v7M1389.500 831v7M1438.500 831v7M1487.500 831v7M1536.500 831v7M1584.500 831v7"/>
<path shape-rendering="crispEdges" stroke="#00e000" d="M616.800 834v4m9.775-4v4m9.775-4v4m9.775-4v4m19.550-4v4m9.775-4v4m9.775-4v4m9.775-4v4m19.550-4v4m9.775-4v4m9.775-4v4m9.775-4v4m19.550-4v4m9.775-4v4m9.775-4v4m9.775-4v4m19.550-4v4m9.775-4v4m9.775-4v4m9.775-4v4m19.550-4v4m9.775-4v4m9.775-4v4m9.775-4v4m19.550-4v4m9.775-4v4m9.775-4v4m9.775-4v4m19.550-4v4m9.775-4v4m9.775-4v4m9.775-4v4m19.550-4v4m9.775-4v4m9.775-4v4m9.775-4v4m19.550-4v4m9.775-4v4m9.775-4v4m9.775-4v4m19.550-4v4m9.775-4v4m9.775-4v4m9.775-4v4m19.550-4v4m9.775-4v4m9.775-4v4m9.775-4v4m19.550-4v4m9.775-4v4m9.775-4v4m9.775-4v4m19.550-4v4m9.775-4v4m9.775-4v4m9.775-4v4m19.550-4v4m9.775-4v4m9.775-4v4m9.775-4v4m19.550-4v4m9.775-4v4m9.775-4v4m9.775-4v4m19.550-4v4m9.775-4v4m9.775-4v4m9.775-4v4m19.550-4v4m9.775-4v4m9.775-4v4m9.775-4v4m19.550-4v4m9.775-4v4m9.775-4v4m9.775-4v4"/>
<rect x="1445" y="831" width="3" height="22" fill="#ffcc00"/>
<rect x="1445" y="834" width="1" height="4" fill="#e02000"/>
<text x="603" y="851" fill="#00e000" clip-path="url(#c0)" lengthAdjust="spacingAndGlyphs" textLength="22">0 ns</text>
<text class="r" x="704" y="851">5 ns</text><text class="r" x="802" y="851">10 ns</text><text class="r" x="900" y="851">15 ns</text><text class="r" x="997" y="851">20 ns</text><text class="r" x="1095" y="851">25 ns</text><text class="r" x="1193" y="851">30 ns</text><text class="r" x="1291" y="851">35 ns</text><text class="r" x="1388" y="851">40 ns</text><text class="r" x="1486" y="851">45 ns</text><text class="r" x="1584" y="851">50 ns</text>
<rect x="604" y="853" width="1029" height="1" fill="#999"/>
<rect x="1420.500" y="854.500" width="53" height="15" fill="#000" stroke="#f0c000"/>
<text x="1422" y="867" fill="#f0c800" lengthAdjust="spacingAndGlyphs" textLength="49">42.942 ns</text>
<rect x="604" y="870" width="1033" height="1" fill="#ccc"/>

<!-- now / cursor rows -->
<rect x="278" y="829" width="220" height="2" fill="#ccc"/><rect x="501" y="829" width="100" height="2" fill="#ccc"/>
<rect x="278" y="853" width="220" height="19" fill="#808080"/><rect x="501" y="853" width="100" height="19" fill="#808080"/>
<rect x="327" y="853" width="171" height="18" fill="#fff"/><rect x="501" y="853" width="100" height="18" fill="#fff"/>
<text x="467" y="846" fill="#eee" lengthAdjust="spacingAndGlyphs" textLength="21">Now</text>
<text x="566" y="846" fill="#eee" lengthAdjust="spacingAndGlyphs" textLength="25">50 ns</text>
<text x="448" y="866" class="k" lengthAdjust="spacingAndGlyphs" textLength="41">Cursor 1</text>
<text x="544" y="866" class="k" lengthAdjust="spacingAndGlyphs" textLength="48">42.942 ns</text>
<path d="M288 845 292 838 296 845Z" fill="#a0c0e0"/><rect x="299" y="838" width="10" height="9" fill="#a0c8f0"/><circle cx="317" cy="842" r="5" fill="#a0d8a0"/><path d="M314 842H320M317 839V845" stroke="#fff" stroke-width="1.500"/>
<rect x="291" y="860" width="10" height="8" fill="#f0b030"/><path d="M293 860V857C293 854 299 854 299 857V860" fill="none" stroke="#f0b030"/>
<path d="M304 868 311 858" stroke="#a8c8f0" stroke-width="2.500"/>
<circle cx="320" cy="861" r="5" fill="#e06060"/><path d="M317 861H323" stroke="#fff" stroke-width="1.500"/>
<!-- bottom scrolls -->
<rect x="278" y="872" width="220" height="19" fill="#f0f0f0"/><rect x="501" y="872" width="100" height="19" fill="#f0f0f0"/>
<rect x="287" y="875" width="211" height="14" fill="url(#ck)"/><rect x="502" y="875" width="99" height="14" fill="url(#ck)"/>
<use href="#sld" x="287" y="875"/><use href="#srd" x="482" y="875"/><use href="#sld" x="502" y="875"/><use href="#srd" x="585" y="875"/>
<rect x="278" y="889" width="220" height="2" fill="#888"/><rect x="501" y="889" width="100" height="2" fill="#888"/>
<rect x="604" y="871" width="1033" height="20" fill="#f0f0f0"/>
<path d="M604 872H1637" stroke="#bbb"/>
<use href="#sl" x="605" y="875"/><rect x="621" y="875" width="998" height="14" fill="#f0f0f0"/><path d="M1619 875V889H621" stroke="#aaa" fill="none"/>
<rect x="1436" y="876" width="1" height="12" fill="#f0c000"/>
<use href="#sr" x="1620" y="875"/>
<!-- right vscroll -->
<rect x="1639" y="160" width="17" height="19" fill="#808080"/>
<rect x="1639" y="181" width="17" height="649" fill="#f0f0f0"/>
<rect x="1640" y="183" width="14" height="14" fill="#f6f6f6"/><path d="M1654 183V197H1640" stroke="#777" fill="none"/><path d="M1643 192H1651L1647 188Z" fill="#000"/>
<rect x="1640" y="198" width="15" height="613" fill="#f2f2f2"/><path d="M1655 198V248" stroke="#aaa"/>
<rect x="1641" y="248" width="14" height="17" fill="#fff"/>
<rect x="1640" y="812" width="14" height="14" fill="#f6f6f6"/><path d="M1654 812V826H1640" stroke="#777" fill="none"/><path d="M1643 817H1651L1647 822Z" fill="#000"/>
<rect x="1639" y="831" width="17" height="40" fill="#808080"/>
<rect x="1639" y="873" width="17" height="18" fill="#808080"/>

<!-- transcript -->
<rect x="0" y="896" width="1659" height="1" fill="#ccc"/>
<rect x="0" y="903" width="1659" height="19" fill="#f0f0f0"/>
<path d="M3 918V909C3 904 13 904 13 909V918H10V910H6V918Z" fill="#555"/>
<text x="20" y="916" class="k" lengthAdjust="spacingAndGlyphs" textLength="49">Transcript</text>
<g fill="none" stroke="#666"><path d="M76 908.500H1605M76 911.500H1605M76 914.500H1605"/></g>
<rect x="830" y="907" width="22" height="9" fill="#f0f0f0"/>
<path d="M832 908.500H850M832 910.500H850M832 912.500H850M832 914.500H850" stroke="#333" stroke-dasharray="1 1"/>
<use href="#plus" x="1616" y="912"/><use href="#flt" x="1632" y="912"/><use href="#cls" x="1649" y="912"/>
<rect x="4" y="922" width="1636" height="61" fill="#fff"/>
<rect x="3" y="922" width="1637" height="1" fill="#000"/><rect x="3" y="922" width="1" height="61" fill="#000"/>
<text class="mono" x="7" y="934" fill="#0000ff" style="font-size:11.67px">#    Time: 50 ns  Iteration: 0  Instance: /PULSE_CNT_vlg_tst</text>
<text class="mono" x="7" y="949" fill="#008000" style="font-size:11.67px"># Break in Module PULSE_CNT_vlg_tst at E:/Learning_Files/FPGA/Learning/Xiao Code/PULSE_CNT/simulation/modelsim/PULSE_CNT.vt line 50</text>
<text class="mono" x="7" y="964" fill="#ff0000" style="font-size:11.67px"># could not find interpreter "ScintillaTk"</text>
<!-- transcript vscroll -->
<rect x="1641" y="922" width="16" height="61" fill="url(#ck)"/>
<rect x="1642" y="923" width="15" height="16" fill="#f0f0f0"/><path d="M1657 923V939H1642" stroke="#aaa" fill="none"/><path d="M1645 933H1654L1649.500 928Z" fill="#aaa"/>
<rect x="1642" y="977" width="15" height="6" fill="#f0f0f0" stroke="#bbb"/>
<!-- watermark -->
<g fill="none" stroke="#cfcfcf" stroke-width="1.500">
<path d="M1535 933C1520 933 1512 944 1512 953 1512 965 1522 975 1531 975 1542 975 1548 965 1548 953 1548 946 1544 942 1541 938 1538 934 1538 930 1538 928"/>
<path d="M1522 955 1540 946M1530 965 1542 956"/><circle cx="1520" cy="956" r="3"/><circle cx="1541" cy="954" r="3"/>
</g>
<text x="1552" y="954" style="font-size:17px;font-weight:bold" fill="#fff" stroke="#d0d0d0" stroke-width=".6" lengthAdjust="spacingAndGlyphs" textLength="88">电子发烧友</text>
<text x="1553" y="971" style="font-size:12px;font-weight:bold" fill="#fff" stroke="#cfcfcf" stroke-width=".5" lengthAdjust="spacingAndGlyphs" textLength="98">www.elecfans.com</text>
</svg>
</body></html>
